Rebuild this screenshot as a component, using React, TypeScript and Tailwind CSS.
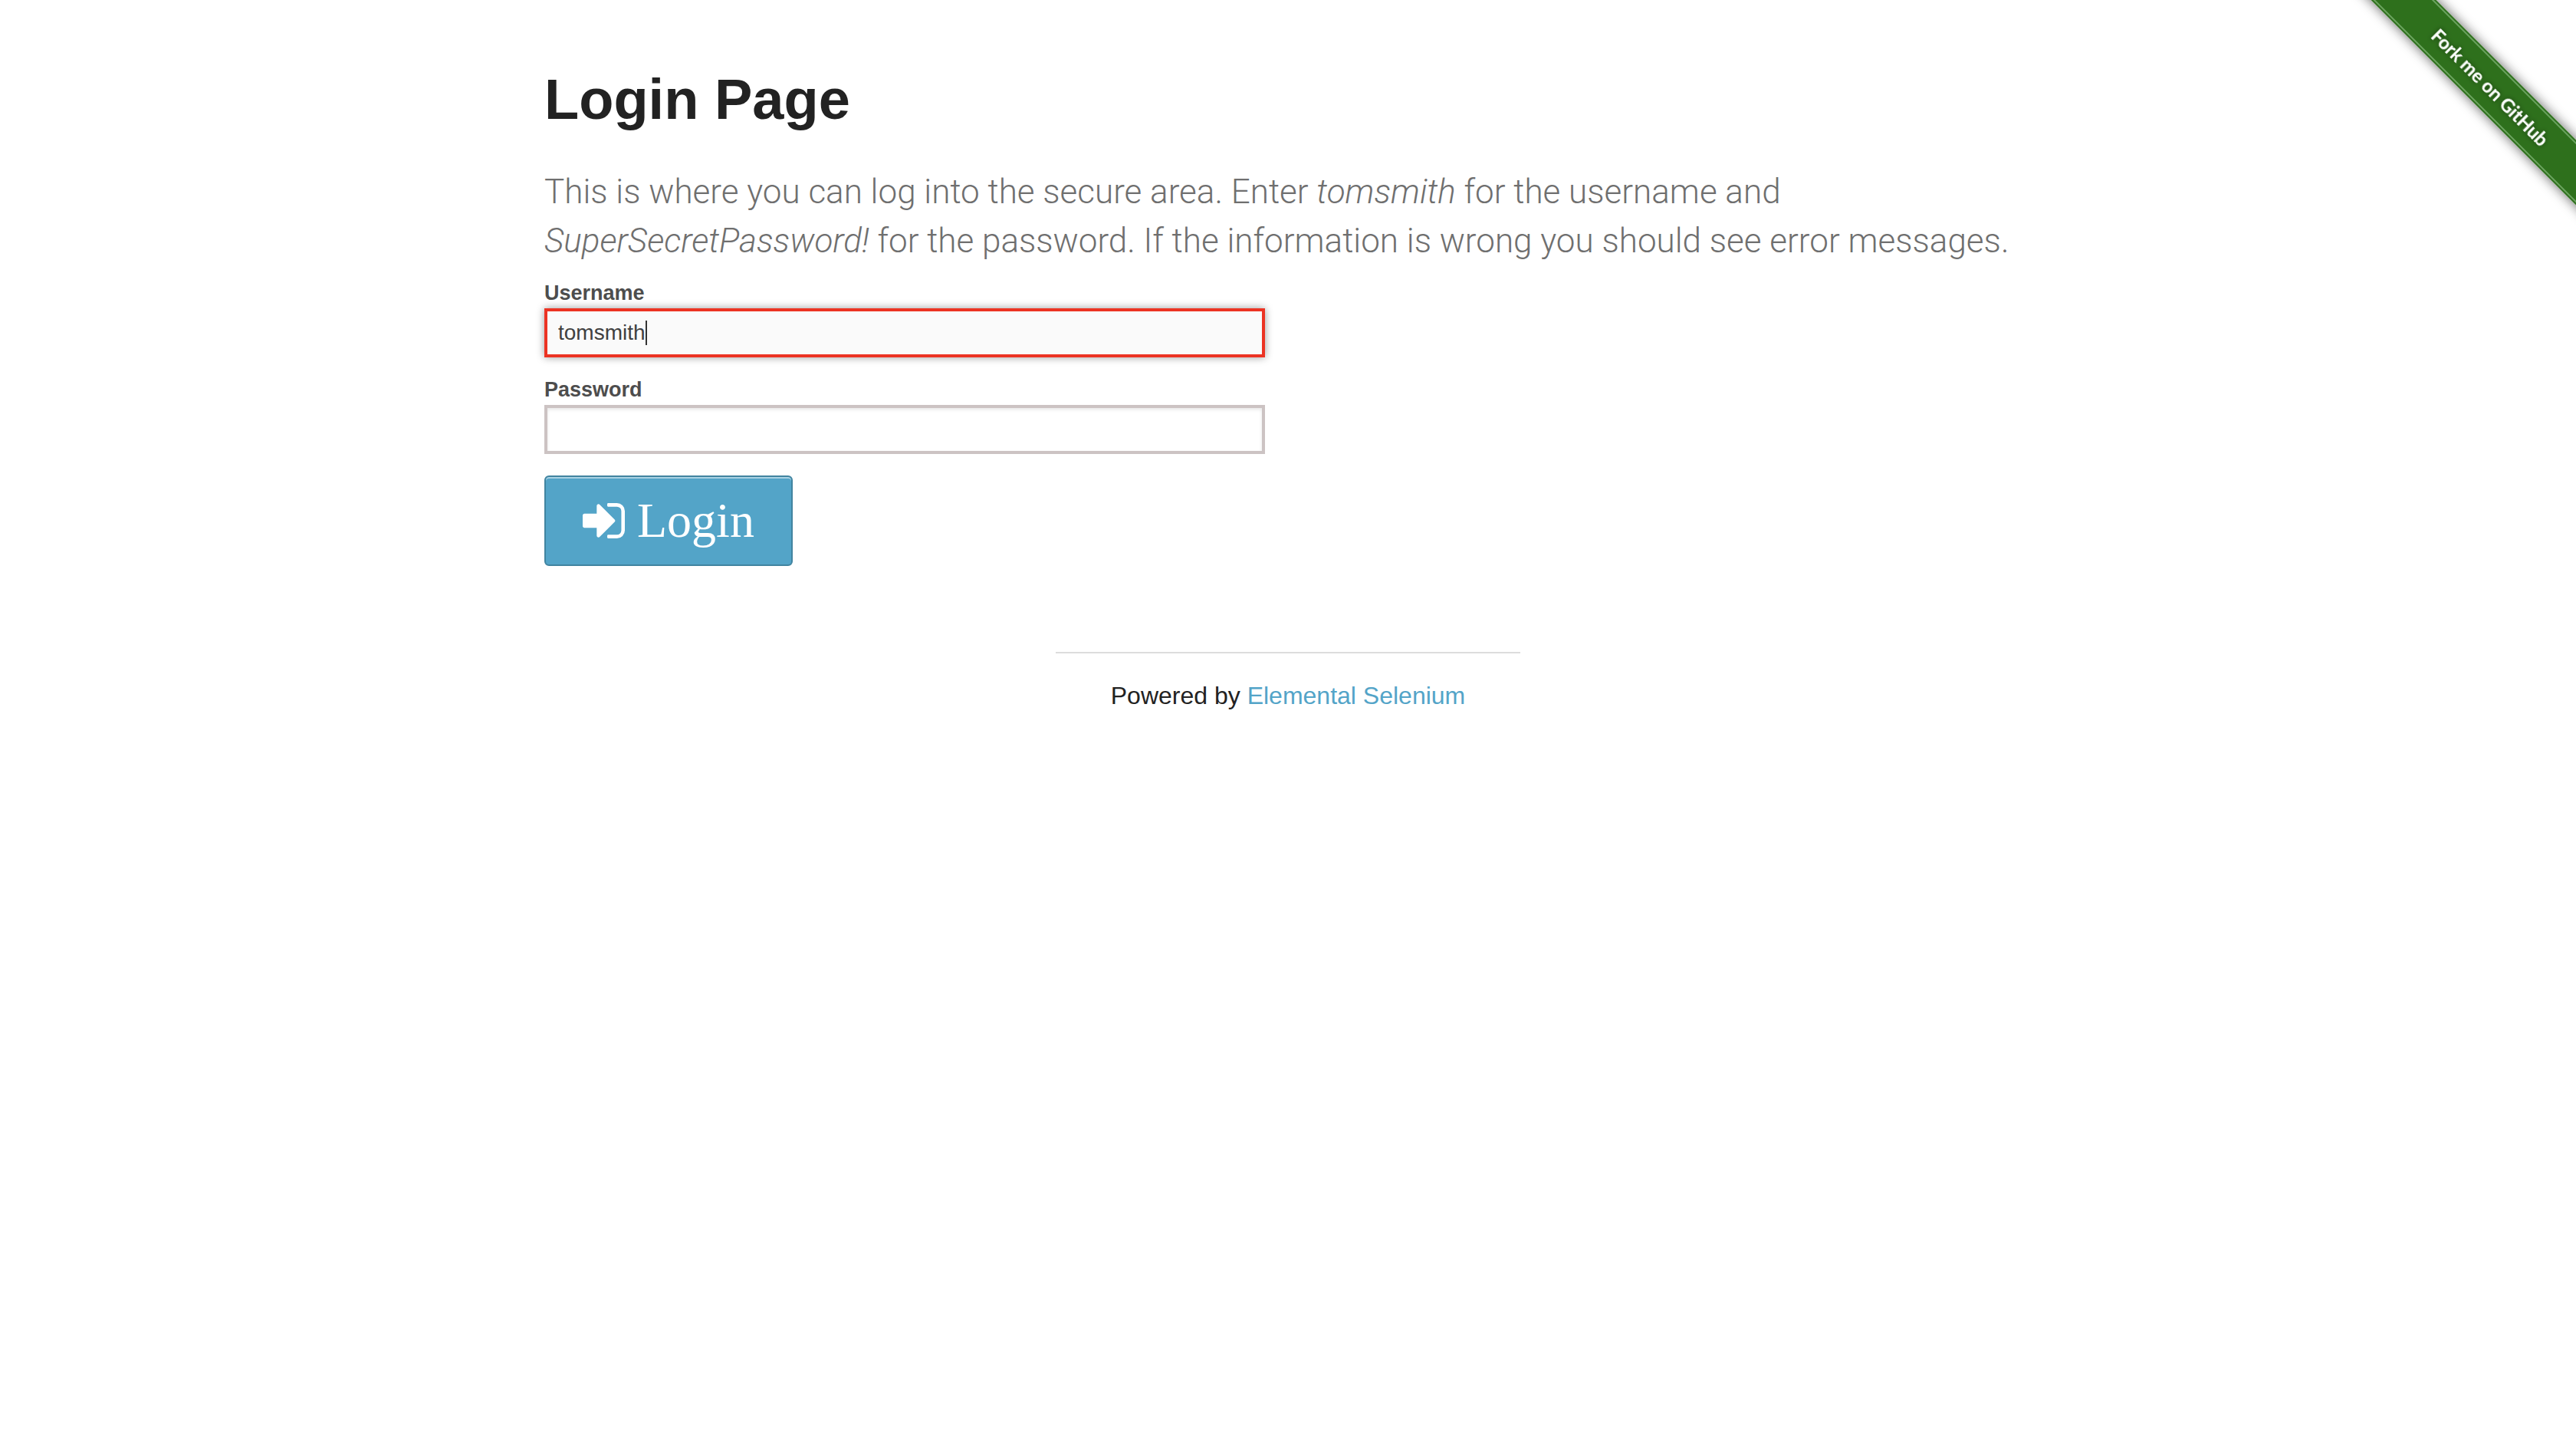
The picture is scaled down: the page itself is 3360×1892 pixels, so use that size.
import { useState } from "react";

function SignInIcon() {
  return (
    <svg viewBox="128 256 1536 1280" className="h-[46px] w-[55px] shrink-0 fill-white" aria-hidden="true">
      <path d="M1312 896q0 26-19 45l-544 544q-19 19-45 19t-45-19-19-45v-288h-448q-26 0-45-19t-19-45v-384q0-26 19-45t45-19h448v-288q0-26 19-45t45-19 45 19l544 544q19 19 19 45zm352-352v704q0 119-84.5 203.5t-203.5 84.5h-320q-13 0-22.5-9.5t-9.5-22.5q0-4-1-20t-.5-26.5 3-23.5 10-19.5 20.5-6.5h320q66 0 113-47t47-113v-704q0-66-47-113t-113-47h-312l-11.5-1-11.5-3-8-5.5-7-9-2-13.5q0-4-1-20t-.5-26.5 3-23.5 10-19.5 20.5-6.5h320q119 0 203.5 84.5t84.5 203.5z" />
    </svg>
  );
}

function ForkRibbon() {
  return (
    <a href="#fork" className="absolute top-0 right-0 block">
      <svg viewBox="0 0 298 298" className="block size-[298px]" role="img" aria-label="Fork me on GitHub">
        <defs>
          <filter id="band-shadow" x="-10%" y="-60%" width="120%" height="220%">
            <feDropShadow dx="0" dy="0" stdDeviation="8" floodColor="#000" floodOpacity="0.6" />
          </filter>
          <filter id="text-shadow" x="-10%" y="-50%" width="120%" height="200%">
            <feDropShadow dx="0" dy="0" stdDeviation="3" floodColor="#000" floodOpacity="0.5" />
          </filter>
        </defs>
        <g transform="translate(185 112) rotate(45)">
          <rect x="-260" y="-30" width="520" height="60" fill="#2f6f1f" filter="url(#band-shadow)" />
          <path d="M-260-27H260M-260 27H260" stroke="#6ba35f" strokeWidth="2" />
          <text
            x="2"
            y="10"
            textAnchor="middle"
            fill="#fff"
            filter="url(#text-shadow)"
            className="font-['Lato',sans-serif] text-[24px] font-bold"
          >
            Fork me on GitHub
          </text>
        </g>
      </svg>
    </a>
  );
}

export default function App() {
  const [username, setUsername] = useState("tomsmith");
  const [password, setPassword] = useState("");

  return (
    <div className="relative min-h-screen overflow-hidden bg-white font-['Liberation_Sans',Arial,sans-serif] text-[#222]">
      <ForkRibbon />
      <main className="mx-auto max-w-[2000px] px-[30px] pt-[77px]">
        <h1 className="text-[74px] leading-[106px] font-bold">Login Page</h1>
        <p className="mt-[35px] font-['Roboto',sans-serif] text-[44px] leading-[64px] font-light text-[#6f6f6f]">
          This is where you can log into the secure area. Enter <em>tomsmith</em> for the username and{" "}
          <em>SuperSecretPassword!</em> for the password. If the information is wrong you should see error messages.
        </p>
        <form className="mt-4" onSubmit={(e) => e.preventDefault()}>
          <div className="grid grid-cols-2 gap-x-[60px] gap-y-[22px]">
            <div className="col-start-1">
              <label htmlFor="username" className="block text-[27px] leading-[40px] font-bold text-[#4d4d4d]">
                Username
              </label>
              <div className="relative">
                <input
                  id="username"
                  type="text"
                  value={username}
                  onChange={(e) => setUsername(e.target.value)}
                  className="block h-16 w-full border-4 border-[#ec3323] bg-[#fafafa] px-[14px] text-[28px] text-[#404040] caret-transparent shadow-[0_0_10px_rgba(0,0,0,0.4)] outline-none"
                />
                <div className="pointer-events-none absolute inset-y-0 left-[18px] flex items-center text-[28px]">
                  <span className="invisible">{username}</span>
                  <span className="h-8 w-0.5 bg-[#333]" />
                </div>
              </div>
            </div>
            <div className="col-start-1">
              <label htmlFor="password" className="block text-[27px] leading-[40px] font-bold text-[#4d4d4d]">
                Password
              </label>
              <input
                id="password"
                type="password"
                value={password}
                onChange={(e) => setPassword(e.target.value)}
                className="block h-16 w-full border-4 border-[#ccc3c3] bg-white px-[14px] text-[28px] shadow-[inset_0_2px_4px_rgba(0,0,0,0.1)] outline-none"
              />
            </div>
          </div>
          <button
            type="submit"
            className="mt-7 flex h-[118px] items-center gap-4 rounded-md border-2 border-[#4184a0] bg-[#53a4c8] px-12 font-['Liberation_Serif',serif] text-[64px] leading-none text-white shadow-[inset_0_2px_0_rgba(255,255,255,0.5)]"
          >
            <SignInIcon />
            Login
          </button>
        </form>
      </main>
      <footer className="mx-auto mt-28 max-w-[2000px] text-center">
        <div className="mx-auto w-1/3 px-[30px]">
          <hr className="border-t-2 border-[#ddd]" />
          <p className="mt-[31px] text-[32px] leading-[48px]">
            Powered by{" "}
            <a href="#elemental-selenium" className="text-[#53a4c8]">
              Elemental Selenium
            </a>
          </p>
        </div>
      </footer>
    </div>
  );
}
